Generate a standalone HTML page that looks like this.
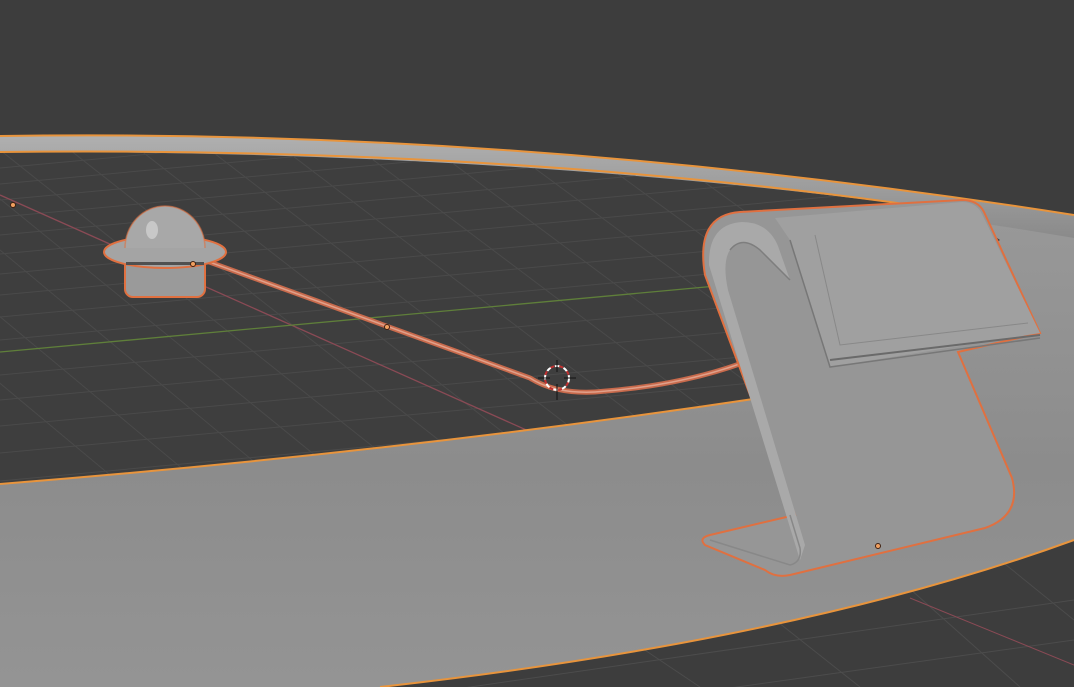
<!DOCTYPE html>
<html><head><style>
html,body{margin:0;padding:0;background:#3d3d3d;overflow:hidden}
svg{display:block}
</style></head><body>
<svg width="1074" height="687" viewBox="0 0 1074 687" xmlns="http://www.w3.org/2000/svg">
<defs>
<clipPath id="floor"><path d="M0,152 Q520,150 960,212 L1000,240 L760,398 Q400,452 0,484 Z"/></clipPath>
<clipPath id="below"><path d="M380,687 Q800,640 1074,540 L1074,687 Z"/></clipPath>
<linearGradient id="ringg" x1="0" y1="0" x2="0" y2="1">
<stop offset="0" stop-color="#9c9c9c"/><stop offset="0.6" stop-color="#8c8c8c"/><stop offset="1" stop-color="#949494"/></linearGradient>
<linearGradient id="band" x1="0" y1="0" x2="0" y2="1">
<stop offset="0" stop-color="#b0b0b0"/><stop offset="1" stop-color="#8a8a8a"/></linearGradient>
</defs>
<rect width="1074" height="687" fill="#3d3d3d"/>
<path d="M0,136 Q520,128 1074,215 L1074,540 Q800,640 380,687 L0,687 Z" fill="url(#ringg)"/>
<path d="M0,136 Q520,128 1074,215 L1074,238 Q520,145 0,152 Z" fill="url(#band)"/>
<path d="M0,152 Q520,150 960,212 L1000,240 L760,398 Q400,452 0,484 Z" fill="#3e3e3e"/>
<g clip-path="url(#floor)" stroke="#4a4a4a" stroke-width="1">
<line x1="0" y1="168" x2="1074" y2="68"/><line x1="0" y1="184" x2="1074" y2="84"/>
<line x1="0" y1="200" x2="1074" y2="100"/><line x1="0" y1="217" x2="1074" y2="117"/>
<line x1="0" y1="235" x2="1074" y2="135"/><line x1="0" y1="254" x2="1074" y2="154"/>
<line x1="0" y1="274" x2="1074" y2="174"/><line x1="0" y1="295" x2="1074" y2="195"/>
<line x1="0" y1="317" x2="1074" y2="217"/><line x1="0" y1="340" x2="1074" y2="240"/>
<line x1="0" y1="375" x2="1074" y2="275"/><line x1="0" y1="400" x2="1074" y2="300"/>
<line x1="0" y1="426" x2="1074" y2="326"/><line x1="0" y1="453" x2="1074" y2="353"/>
<line x1="0" y1="481" x2="1074" y2="381"/><line x1="0" y1="510" x2="1074" y2="410"/>
<line x1="-120" y1="150" x2="300" y2="500"/><line x1="-60" y1="150" x2="370" y2="500"/>
<line x1="0" y1="150" x2="440" y2="500"/><line x1="70" y1="150" x2="515" y2="500"/>
<line x1="140" y1="150" x2="590" y2="500"/><line x1="210" y1="150" x2="665" y2="500"/>
<line x1="285" y1="150" x2="745" y2="500"/><line x1="360" y1="150" x2="825" y2="500"/>
<line x1="435" y1="150" x2="905" y2="500"/><line x1="510" y1="150" x2="985" y2="500"/>
<line x1="585" y1="150" x2="1065" y2="500"/><line x1="660" y1="150" x2="1145" y2="500"/>
<line x1="-200" y1="150" x2="220" y2="500"/><line x1="-280" y1="150" x2="140" y2="500"/>
</g>
<g clip-path="url(#floor)">
<line x1="0" y1="195" x2="560" y2="445" stroke="#8a4a55" stroke-width="1.3"/>
<line x1="0" y1="352" x2="760" y2="282" stroke="#5f7f3a" stroke-width="1.3"/>
</g>
<g clip-path="url(#below)" stroke="#4c4c4c">
<line x1="380" y1="700" x2="1074" y2="600"/><line x1="500" y1="720" x2="1074" y2="640"/>
<line x1="600" y1="620" x2="700" y2="687"/><line x1="750" y1="600" x2="860" y2="687"/>
<line x1="900" y1="580" x2="1020" y2="687"/><line x1="1000" y1="560" x2="1074" y2="620"/>
<line x1="910" y1="598" x2="1074" y2="665" stroke="#8a4a55"/>
</g>
<g fill="none" stroke="#e8943c" stroke-width="2">
<path d="M0,136 Q520,128 1074,215"/>
<path d="M0,152 Q520,146 960,212"/>
<path d="M0,484 Q400,452 760,398"/>
<path d="M380,687 Q800,640 1074,540"/>
</g>
<path d="M190,255 L530,378 Q555,394 595,392 Q680,386 745,362" fill="none" stroke="#c86a4c" stroke-width="5"/>
<path d="M190,255 L530,378 Q555,394 595,392 Q680,386 745,362" fill="none" stroke="#e0a08a" stroke-width="1.5"/>
<g stroke="#e07040" stroke-width="2">
<rect x="125" y="255" width="80" height="42" rx="8" fill="#9a9a9a"/>
<ellipse cx="165" cy="252" rx="61" ry="16" fill="#a4a4a4"/>
</g>
<rect x="126" y="262" width="78" height="3" fill="#505050"/>
<path d="M125,248 A40,42 0 0 1 205,248 Z" fill="#a8a8a8"/>
<path d="M125,248 A40,42 0 0 1 205,248" fill="none" stroke="#e07040" stroke-width="1.5" opacity=".6"/>
<ellipse cx="152" cy="230" rx="6" ry="9" fill="#c8c8c8"/>
<circle cx="557" cy="378" r="12" fill="none" stroke="#fff" stroke-width="2" stroke-dasharray="5 4"/>
<circle cx="557" cy="378" r="12" fill="none" stroke="#c03030" stroke-width="2" stroke-dasharray="4 5" stroke-dashoffset="4.5"/>
<path d="M557,360 V372 M557,384 V400 M538,378 H550 M564,378 H576" stroke="#111" stroke-width="1"/>
<!-- S panel -->
<path d="M740,212 L962,200 Q978,200 984,212 L1040,333 L958,352 L1012,478 Q1022,515 985,528 L790,575 Q775,578 765,570 L705,545 Q698,538 710,535 L795,515 L705,275 Q695,215 740,212 Z" fill="#969696" stroke="#e07040" stroke-width="2"/>
<path d="M775,218 L962,202 Q976,202 982,214 L1040,333 L830,367 L790,240 Z" fill="#a0a0a0"/>
<path d="M709,265 Q708,224 742,222 Q768,222 778,246 L790,280 L760,250 Q742,235 730,250 Q722,262 728,290 L805,545 L800,560 Z" fill="#a9a9a9"/>
<path d="M730,250 Q742,235 760,250 L790,280" fill="none" stroke="#7e7e7e" stroke-width="1.5"/>
<path d="M790,240 L830,367 L1040,338" fill="none" stroke="#777" stroke-width="1.5"/>
<path d="M830,360 L1040,335" fill="none" stroke="#6a6a6a" stroke-width="2"/>
<path d="M815,235 L840,345 L1028,323" fill="none" stroke="#888" stroke-width="1"/>
<path d="M790,515 L800,548 Q802,562 790,565 L710,540" fill="none" stroke="#888" stroke-width="1.5"/>
<g fill="#f0a060" stroke="#402010" stroke-width="1">
<circle cx="13" cy="205" r="2.5"/><circle cx="387" cy="327" r="2.5"/>
<circle cx="193" cy="264" r="2.5"/><circle cx="878" cy="546" r="2.5"/>
</g>
</svg>
</body></html>
